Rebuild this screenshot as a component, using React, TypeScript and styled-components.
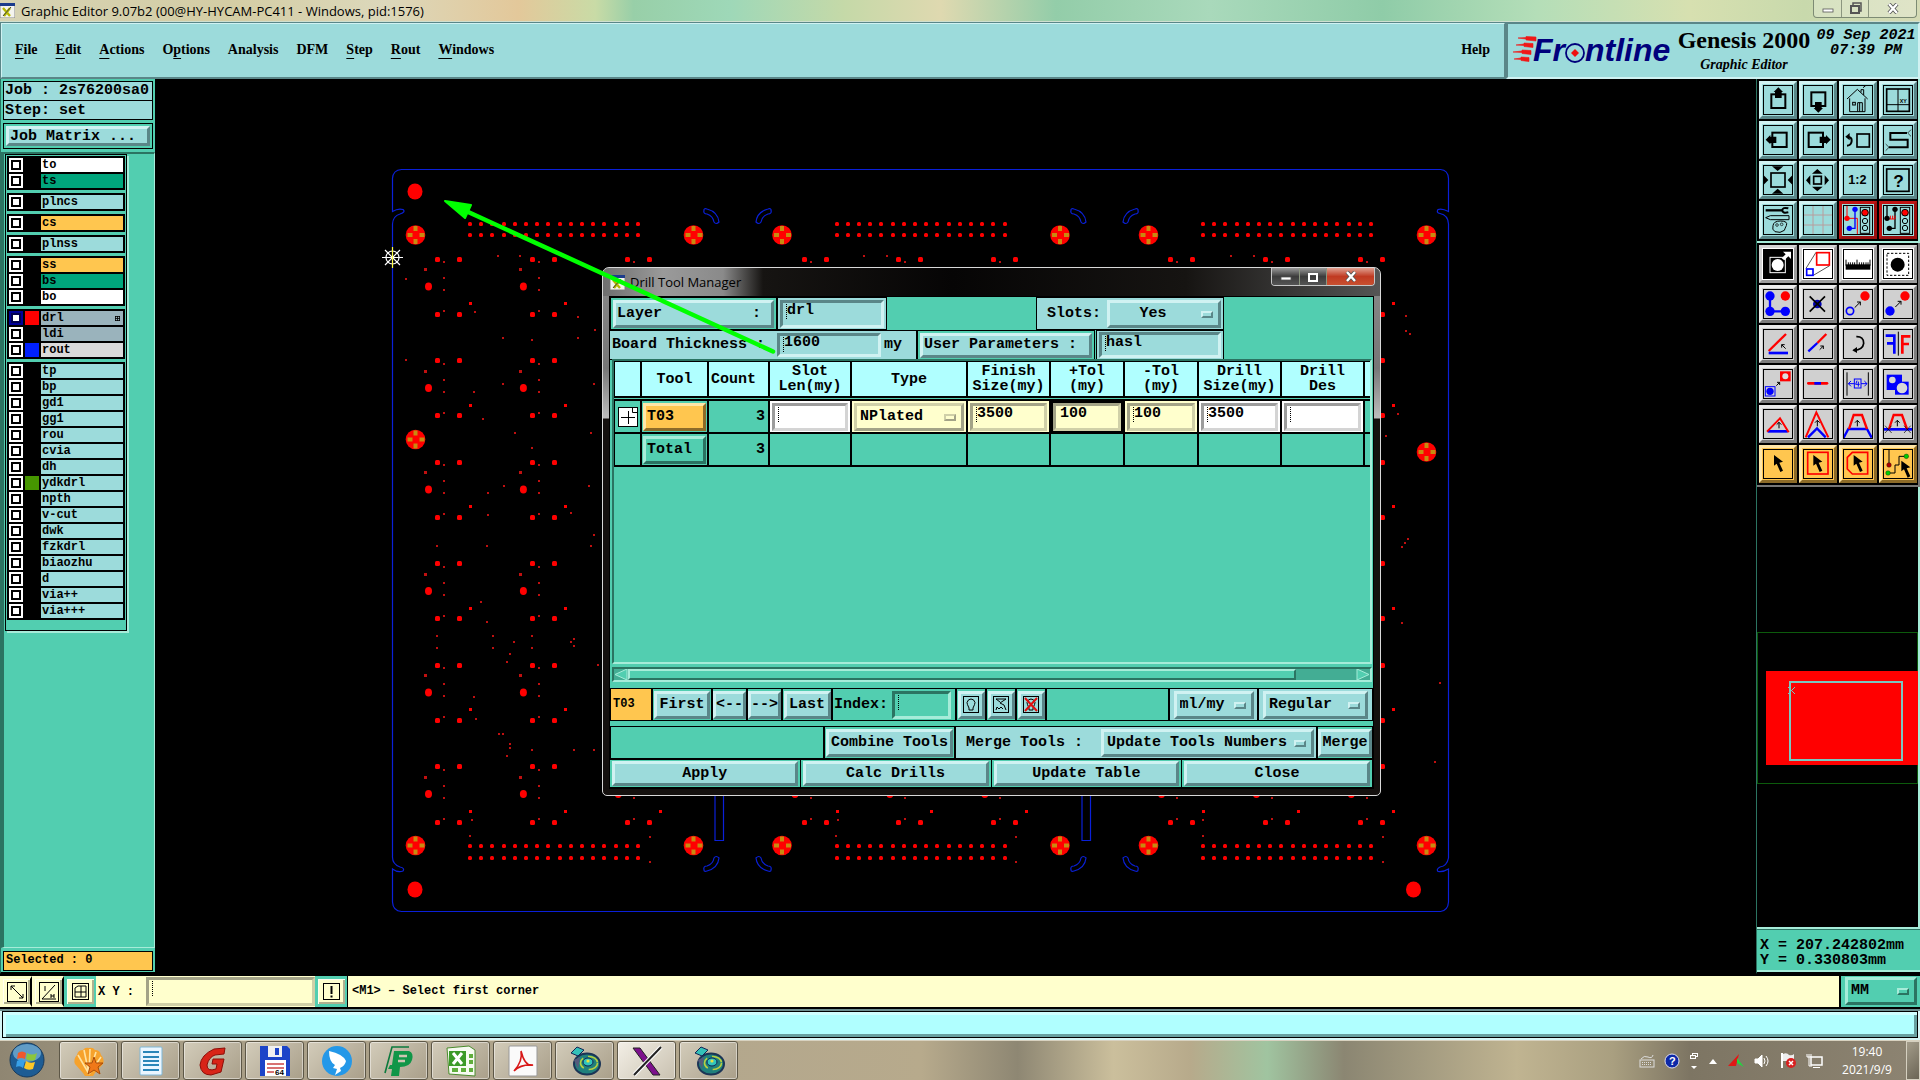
import React from "react";
import styled, { createGlobalStyle, css } from "styled-components";

const c = {
  pale: "#9cdbdb",
  paleLight: "#d0f2f2",
  paleDark: "#5a8688",
  teal: "#52ceb0",
  tealLight: "#a6ecd9",
  tealDark: "#2b7462",
  aqua: "#b0ffff",
  cream: "#ffffcd",
  amber: "#ffc64f",
  blue: "#0a20d8",
};

const mono = '"Liberation Mono", monospace';
const ui = '"Open Sans", "Noto Sans", sans-serif';

const Global = createGlobalStyle`
  *, *::after { box-sizing: border-box; }
  body { margin: 0; background: #000; color: #000; overflow: hidden; }
  button, input, select { font: inherit; color: inherit; margin: 0; border-radius: 0; }
  button { cursor: default; }
`;

type Tone = "pale" | "teal" | "cream" | "white" | "amber" | "grey" | "red";
const tones: Record<Tone, [string, string, string]> = {
  pale: [c.pale, c.paleLight, c.paleDark],
  teal: [c.teal, c.tealLight, c.tealDark],
  cream: [c.cream, "#d0d0a8", "#a3a387"],
  white: ["#ffffff", "#d4d4d4", "#9c9c9c"],
  amber: [c.amber, "#ffe6a8", "#8d6b28"],
  grey: ["#d0d0d0", "#ececec", "#7e7e7e"],
  red: [c.pale, "#c01414", "#9c1010"],
};
const raised = (t: Tone, w = 3) => css`
  background-color: ${tones[t][0]};
  border: ${w}px solid;
  border-color: ${tones[t][1]} ${tones[t][2]} ${tones[t][2]} ${tones[t][1]};
`;
const sunken = (t: Tone, w = 3) => css`
  background-color: ${tones[t][0]};
  border: ${w}px solid;
  border-color: ${tones[t][2]} ${tones[t][1]} ${tones[t][1]} ${tones[t][2]};
`;

const Screen = styled.div`
  min-height: 100vh;
  display: grid;
  grid-template-rows: 22px 57px minmax(0, 1fr) 35px 31px 40px;
  font: bold 15px/16px ${mono};
`;

/* ---------- window title ---------- */
const TitleBar = styled.header`
  display: flex;
  align-items: center;
  gap: 6px;
  font: 13px/20px ${ui};
  border-bottom: 1px solid #cfe0d0;
  background: linear-gradient(90deg, #d6d3b4 0, #d4cda4 12%, #dcd8bb 20%, #e3c89a 27%, #c9dba6 31%, #98cfa8 33%, #9ed8b8 38%, #c5d9a8 44%, #dfd9b0 49%, #93cda9 55%, #a9d9bb 63%, #8fcca8 72%, #b4deb8 80%, #d7e0b0 88%, #c8d9ac 94%, #d5dbb5 100%);
`;
const WinTitle = styled.span`
  flex: 1;
  white-space: nowrap;
`;
const CaptionButtons = styled.div`
  display: flex;
  align-self: flex-start;
  height: 18px;
  margin-right: 3px;
  border: 1px solid #7d8b74;
  border-top: 0;
  border-radius: 0 0 4px 4px;
  overflow: hidden;
`;
const CaptionButton = styled.button<{ $w: number; $fill?: string }>`
  width: ${(p) => p.$w}px;
  display: grid;
  place-items: center;
  padding: 0;
  border: 0;
  border-right: 1px solid #8b967f;
  background: ${(p) => p.$fill ?? "rgba(255,255,255,.25)"};
  &:last-child { border-right: 0; }
`;

/* ---------- menu row ---------- */
const MenuRow = styled.div`
  display: flex;
  background: ${c.pale};
`;
const MenuBar = styled.nav`
  flex: 1;
  display: flex;
  align-items: center;
  gap: 18px;
  padding: 0 14px 1px 13px;
  ${raised("pale", 2)}
  outline: 1px solid ${c.paleDark};
  outline-offset: -1px;
  font: bold 14px/20px "Liberation Serif", serif;
`;
const MenuItem = styled.button`
  padding: 0;
  border: 0;
  background: none;
  u { text-underline-offset: 4px; }
  &:last-child { margin-left: auto; }
`;
const Brand = styled.section`
  width: 414px;
  display: grid;
  grid-template-columns: 162px 140px 1fr;
  ${sunken("pale", 2)}
  padding-left: 4px;
`;
const ProductBox = styled.div`
  padding-top: 2px;
  text-align: center;
  white-space: nowrap;
  font: bold 24px/28px "Liberation Serif", serif;
  small { display: block; font: italic bold 14px/22px "Liberation Serif", serif; }
`;
const DateBox = styled.div`
  text-align: center;
  padding-top: 4px;
  font: italic bold 15px/15px ${mono};
  white-space: nowrap;
`;

/* ---------- main area ---------- */
const Main = styled.main`
  display: grid;
  grid-template-columns: 155px minmax(0, 1fr) 164px;
  min-height: 0;
  background: #000;
`;
const Side = styled.aside`
  display: flex;
  flex-direction: column;
  gap: 3px;
  padding: 2px 2px 1px 2px;
  background: ${c.teal};
  border-left: 1px solid ${c.tealDark};
  border-bottom: 2px solid #000;
`;
const JobInfo = styled.div`
  background: ${c.pale};
  border: 1px solid #000;
  div { padding: 0 1px; height: 18px; line-height: 18px; white-space: nowrap; }
  div + div { height: 19px; line-height: 19px; border-top: 1px solid #000; }
`;
const Framed = styled.div`
  padding: 2px;
  border: 1px solid #000;
`;
const Push = styled.button<{ $tone?: Tone; $align?: string; $w?: number; $h?: number }>`
  ${(p) => raised(p.$tone ?? "pale")}
  ${(p) => (p.$w ? `width: ${p.$w}px;` : "")}
  height: ${(p) => p.$h ?? 28}px;
  padding: ${(p) => (p.$align ? "0 1px" : "0")};
  text-align: ${(p) => p.$align ?? "center"};
  white-space: pre;
  display: ${(p) => (p.$align ? "block" : "grid")};
  place-items: center;
`;
const MatrixButton = styled(Push)`
  width: 100%;
`;
const LayerPane = styled.div`
  flex: 1;
  margin: 0 -2px;
  border: 3px solid;
  border-width: 2px 1px 1px 3px;
  border-color: ${c.tealDark} ${c.tealLight} ${c.tealLight} ${c.tealDark};
`;
const LayerList = styled.div`
  width: 122px;
  display: flex;
  flex-direction: column;
  gap: 3px;
  padding: 1px 1px 10px;
  margin-left: 1px;
  border: 1px solid #000;
  box-shadow: 2px 2px 0 ${c.tealLight};
`;
const LayerGroup = styled.ul`
  margin: 0;
  padding: 2px;
  list-style: none;
  display: grid;
  gap: 2px;
  background: #000;
  font-size: 12px;
  line-height: 14px;
`;
const LayerRow = styled.li`
  height: 14px;
  label { display: grid; grid-template-columns: 14px 14px 1fr; gap: 2px; height: 14px; }
`;
const LayerCheck = styled.input<{ $on?: boolean }>`
  appearance: none;
  width: 14px;
  height: 14px;
  background: #fff;
  border: 2px solid ${(p) => (p.$on ? "#000098" : "#fff")};
  box-shadow: inset 0 0 0 2px ${(p) => (p.$on ? "#000050" : "#000")};
`;
const Swatch = styled.span<{ $fill: string }>`
  background: ${(p) => p.$fill};
`;
const LayerName = styled.span<{ $fill: string }>`
  display: flex;
  justify-content: space-between;
  align-items: center;
  padding: 0 3px 0 1px;
  background: ${(p) => p.$fill};
`;
const Selected = styled.div`
  height: 20px;
  padding: 0 2px;
  background: ${c.amber};
  border: 1px solid #000;
  font-size: 12px;
  line-height: 17px;
`;

const Canvas = styled.div`
  position: relative;
  overflow: hidden;
  background: #000;
`;
const Artwork = styled.svg`
  position: absolute;
  inset: 0;
  width: 100%;
  height: 100%;
  pointer-events: none;
`;

/* ---------- right tools ---------- */
const Tools = styled.aside`
  display: flex;
  flex-direction: column;
  background: ${c.teal};
  border-left: 1px solid ${c.tealDark};
  border-bottom: 2px solid #000;
`;
const ToolGrid = styled.div<{ $grey?: boolean }>`
  display: grid;
  grid-template-columns: repeat(4, 38px);
  gap: 2px;
  padding: 2px 1px 2px 2px;
  background: #000;
  border-right: 2px solid ${(p) => (p.$grey ? "#777" : c.tealLight)};
  border-bottom: 2px solid ${(p) => (p.$grey ? "#777" : c.tealLight)};
`;
const ToolButton = styled.button<{ $tone: Tone }>`
  ${(p) => raised(p.$tone)}
  width: 38px;
  height: 38px;
  padding: 1px;
  svg { display: block; width: 30px; height: 30px; }
`;
const Overview = styled.div`
  flex: 1;
  display: flex;
  flex-direction: column;
  justify-content: center;
  padding-top: 2px;
  background: #000;
  border-right: 2px solid ${c.tealLight};
  border-bottom: 2px solid ${c.tealLight};
`;
const OverviewFrame = styled.div`
  height: 152px;
  padding: 38px 0 18px 8px;
  border: 1px solid #0c5a0c;
`;
const Coordinates = styled.div`
  height: 43px;
  padding: 8px 3px 0;
  border-top: 1px solid ${c.tealDark};
  border-bottom: 2px solid ${c.tealLight};
  line-height: 15px;
  white-space: pre;
`;

/* ---------- prompt / status ---------- */
const Prompt = styled.div`
  display: flex;
  align-items: stretch;
  background: ${c.cream};
  border: 2px solid #000;
  border-width: 2px 0 2px 0;
  font-size: 12px;
`;
const SmallTool = styled.button<{ $teal?: boolean }>`
  width: 32px;
  padding: 0;
  background: ${c.cream};
  border: 3px solid ${(p) => (p.$teal ? c.teal : c.cream)};
  border-right: 2px solid ${(p) => (p.$teal ? c.teal : "#000")};
  display: grid;
  place-items: center;
  box-shadow: inset 1px 1px 0 #fffff0, inset -2px -2px 0 #b0b08f;
`;
const PromptLabel = styled.label`
  display: flex;
  align-items: center;
  padding-left: 2px;
  gap: 12px;
  white-space: pre;
`;
const Field = styled.input<{ $tone?: Tone; $w?: number; $h?: number; $caret?: boolean }>`
  ${(p) => sunken(p.$tone ?? "pale")}
  width: ${(p) => (p.$w ? `${p.$w}px` : "100%")};
  height: ${(p) => p.$h ?? 28}px;
  min-width: 0;
  display: block;
  padding: 0 2px 6px 4px;
  outline: 0;
  background-image: ${(p) => (p.$caret === false ? "none" : "repeating-linear-gradient(#000 0 1px, transparent 1px 2px)")};
  background-size: 1px 15px;
  background-position: 3px 1px;
  background-repeat: no-repeat;
`;
const Message = styled.div`
  flex: 1;
  padding-left: 4px;
  line-height: 30px;
  border-left: 1px solid #000;
  border-right: 2px solid #000;
`;
const UnitBox = styled.div`
  padding: 1px 3px 0 4px;
  background: ${c.teal};
  font-size: 15px;
`;
const StatusBar = styled.div`
  padding: 2px 2px 1px;
  background: linear-gradient(#6f8f90 0 2px, #d6f6f6 2px);
  div { height: 27px; border: 1px solid #000; box-shadow: inset 3px 3px 0 #d0ffff, inset -3px -3px 0 #68a0a0; background: ${c.aqua}; }
`;

const PickBox = styled.span<{ $w: number; $h: number; $tone: Tone }>`
  position: relative;
  display: block;
  width: ${(p) => p.$w}px;
  height: ${(p) => p.$h}px;
  &::after {
    content: "";
    position: absolute;
    right: 8px;
    top: calc(50% - 3px);
    width: 12px;
    height: 7px;
    ${(p) => raised(p.$tone, 2)}
    pointer-events: none;
  }
`;
const PickSelect = styled.select<{ $tone: Tone; $align: string }>`
  ${(p) => raised(p.$tone)}
  appearance: none;
  width: 100%;
  height: 100%;
  padding: ${(p) => (p.$align === "center" ? "0 22px 0 0" : "0 0 0 3px")};
  text-align: ${(p) => p.$align};
  text-align-last: ${(p) => p.$align};
  outline: 0;
`;
function Pick(p: { value: string; label: string; w: number; h?: number; tone?: Tone; align?: string }) {
  const tone = p.tone ?? "pale";
  return (
    <PickBox $w={p.w} $h={p.h ?? 28} $tone={tone}>
      <PickSelect aria-label={p.label} $tone={tone} $align={p.align ?? "left"} defaultValue={p.value}>
        <option>{p.value}</option>
      </PickSelect>
    </PickBox>
  );
}

/* ---------- dialog ---------- */
const Dialog = styled.section`
  position: absolute;
  left: 447px;
  top: 188px;
  width: 779px;
  padding: 0 6px 6px;
  display: flex;
  flex-direction: column;
  border: 1px solid #d8d8d8;
  border-radius: 7px 7px 5px 5px;
  background: linear-gradient(#8a8a8a 0, #777 100px, #bdbdbd 150px, #14100e 151px);
`;
const DialogTitle = styled.div`
  height: 28px;
  margin: 0 -6px;
  padding-left: 7px;
  display: flex;
  align-items: center;
  gap: 5px;
  border-radius: 6px 6px 0 0;
  background: linear-gradient(90deg, #6f6f6f 0, #9a9a9a 60px, #8a8a8a 120px, #161412 160px, #060505 45%, #161412 75%, #555 100%);
  font: 13px/20px ${ui};
  span { flex: 1; }
`;
const DialogButtons = styled(CaptionButtons)`
  margin-right: 5px;
  border-color: #c6c6c6;
`;
const DialogBody = styled.div`
  border: 1px solid #000;
  border-bottom-width: 2px;
  background: ${c.teal};
  display: flex;
  flex-direction: column;
`;
const Line = styled.div`
  display: flex;
  height: 33px;
  align-items: stretch;
`;
const Cell = styled.div<{ $w?: number; $tone?: Tone; $gap?: number; $pad?: number }>`
  ${(p) => (p.$w ? `width: ${p.$w}px;` : "flex: 1;")}
  display: flex;
  align-items: center;
  gap: ${(p) => p.$gap ?? 0}px;
  padding: 0 ${(p) => p.$pad ?? 2}px;
  background: ${(p) => tones[p.$tone ?? "teal"][0]};
  border: 1px solid #000;
  white-space: pre;
`;
const Spacer = styled.div<{ $w?: number }>`
  ${(p) => (p.$w ? `width: ${p.$w}px;` : "flex: 1;")}
`;
const RowGap = styled.div`
  height: 5px;
`;
const FieldLabel = styled.label`
  white-space: pre;
`;
const WideLine = styled(Line)`
  height: 30px;
`;
const ThicknessCell = styled(Cell)`
  justify-content: space-between;
  padding: 0 4px 0 2px;
  border-left-width: 0;
`;
const TableView = styled.div`
  height: 305px;
  margin: -1px 1px 0 2px;
  overflow: hidden;
  ${sunken("teal", 2)}
`;
const ToolTable = styled.table`
  width: 780px;
  table-layout: fixed;
  border-collapse: collapse;
  margin: -1px 0 0 -1px;
  th, td { border: 2px solid #000; padding: 0; font-weight: bold; }
  th { height: 36px; background: ${c.aqua}; line-height: 15px; }
  th:nth-child(3) { text-align: left; padding-left: 2px; }
  td { height: 33px; text-align: right; }
`;
const GapRow = styled.tr`
  && td { height: 3px; border-left: 0; border-right: 0; }
`;
const CountCell = styled.td`
  && { padding-right: 3px; }
`;
const InputCell = styled.td<{ $tone: Tone; $focus?: boolean }>`
  background: ${(p) => tones[p.$tone][0]};
  ${(p) => (p.$focus ? "box-shadow: inset 0 0 0 2px #000;" : "")}
  && { padding: 1px 2px; }
`;
const Expand = styled.button`
  display: block;
  width: 20px;
  height: 20px;
  margin: 0 auto;
  padding: 0;
  border: 1px solid #000;
  background: #fff;
  svg { display: block; }
`;
const RowButton = styled(Push)`
  width: 63px;
  margin: 0 auto;
`;
const Scroll = styled.div`
  display: flex;
  height: 15px;
  margin: 3px 1px 6px 2px;
  ${sunken("teal", 2)}
  background: #43ad94;
  svg { display: block; }
`;
const Thumb = styled.div`
  width: 668px;
  margin-right: auto;
  ${raised("teal", 2)}
`;
const ToolTag = styled.div`
  width: 42px;
  padding-left: 2px;
  background: ${c.amber};
  border: 1px solid #000;
  font-size: 12px;
  line-height: 31px;
`;
const NavCell = styled(Cell)`
  justify-content: center;
  padding: 0;
`;
const Footer = styled.div`
  display: grid;
  grid-template-columns: repeat(4, 1fr);
  border-top: 1px solid #000;
  > div { padding: 1px 2px; border-right: 1px solid #000; }
  button { width: 100%; }
`;

/* ---------- taskbar ---------- */
const Taskbar = styled.footer`
  display: flex;
  padding-left: 5px;
  background: linear-gradient(90deg, #8f8672 0, #a79d86 10%, #b3a78d 36%, #b7aa8c 48%, #8e8773 53%, #cbbf9c 58%, #b7aa8b 62%, #a0c4a0 66%, #8b8672 70%, #c0b491 79%, #a99f80 84%, #7d7563 88%, #8d8472 100%);
  border-top: 1px solid #d8d2c0;
`;
const Start = styled.button`
  width: 44px;
  margin-right: 10px;
  padding: 0;
  border: 0;
  background: none;
`;
const TaskButton = styled.button<{ $active?: boolean }>`
  width: 59px;
  margin-right: 3px;
  padding: 0;
  display: grid;
  place-items: center;
  border: 1px solid #5d5747;
  border-radius: 3px;
  box-shadow: inset 0 0 0 1px rgba(255, 255, 255, 0.45);
  background: ${(p) => (p.$active ? "linear-gradient(135deg,#f3efe6,#c9c1b0)" : "linear-gradient(135deg,#d3ccba,#a99f8a)")};
`;
const Tray = styled.div`
  margin-left: auto;
  display: flex;
  align-items: center;
  gap: 9px;
  color: #fff;
  svg { display: block; }
`;
const Clock = styled.div`
  width: 70px;
  text-align: center;
  font: 12px/18px ${ui};
`;
const ShowDesktop = styled.button`
  width: 14px;
  height: 39px;
  margin-left: -5px;
  padding: 0;
  border: 1px solid #d5d0c0;
  background: linear-gradient(135deg, #a39c8a, #6b6555);
`;

/* ---------- drawings ---------- */
const k = { fill: "none", stroke: "#000" };
const cursor = "M33 18V50L41 44L52 69L60 65L49 41L60 38Z";
const R = "#f00";
const B = "#0000ff";
const tip = (x: number, y: number) => <path {...k} strokeWidth="3" d={`M${x} ${y}l17 -17m-10 0h10v10`} />;
const light = (
  <g stroke="#000" strokeWidth="3" fill="none">
    <rect x="52" y="7" width="28" height="78" />
    <circle cx="66" cy="23" r="10" fill={R} />
    <circle cx="66" cy="48" r="8" />
    <circle cx="66" cy="69" r="8" />
  </g>
);
const trap = <path {...k} stroke={R} strokeWidth="7" d="M18 60L32 18H57L72 60" />;
const up = (x: number, y: number) => <path {...k} strokeWidth="3" d={`M${x} ${y}v-18m-7 7l7 -7l7 7`} />;

const viewTools: [string, Tone, React.ReactNode][] = [
  ["Pan up", "pale", <><rect {...k} strokeWidth="6" x="25" y="28" width="42" height="41" /><path d="M46 7L60 21H56V39H36V21H32Z" /></>],
  ["Pan down", "pale", <><rect {...k} strokeWidth="6" x="25" y="22" width="42" height="41" /><path d="M46 83L60 69H56V51H36V69H32Z" /></>],
  ["Home", "pale", <g {...k} strokeWidth="3"><path d="M12 42L43 13L74 42M20 40V80H66V40M54 22V14H62V30M60 8l8 -6" /><rect x="29" y="52" width="8" height="8" /><path d="M44 80V53H58V80M50 53V80" /></g>],
  ["Zoom XY", "pale", <><rect {...k} strokeWidth="5" x="11" y="12" width="68" height="67" /><path {...k} strokeWidth="3" d="M45 12V79M11 59H79" /><text x="50" y="53" fontSize="16" fontFamily="Liberation Sans">XY</text></>],
  ["Pan left", "pale", <><rect {...k} strokeWidth="6" x="28" y="23" width="43" height="43" /><path d="M8 44L22 30V35H40V54H22V58Z" /></>],
  ["Pan right", "pale", <><rect {...k} strokeWidth="6" x="17" y="23" width="43" height="43" /><path d="M83 44L69 30V35H50V54H69V58Z" /></>],
  ["Previous view", "pale", <><rect {...k} strokeWidth="5" x="42" y="27" width="37" height="39" /><path {...k} strokeWidth="6" d="M14 36Q27 36 26 48Q25 61 12 62" /><path d="M7 35L20 24V46Z" /></>],
  ["Serpentine", "pale", <><path {...k} strokeWidth="6" d="M72 24H22V44H74V67H18" /><path {...k} strokeWidth="2" d="M74 24L84 14M74 24L84 34M18 67L8 57M18 67L8 77" /></>],
  ["Zoom out", "pale", <><rect {...k} strokeWidth="5" x="24" y="24" width="42" height="42" /><path d="M27 4H61L44 18ZM27 86H61L44 71ZM2 31L16 45L2 59ZM88 31L74 45L88 59Z" /></>],
  ["Zoom in", "pale", <><rect {...k} strokeWidth="5" x="32" y="34" width="23" height="23" /><path d="M43 12L59 26H27ZM43 79L59 65H27ZM9 46L22 31V61ZM78 46L65 31V61Z" /></>],
  ["Scale", "pale", <text x="16" y="58" fontSize="38" fontWeight="bold" fontFamily="Liberation Sans">1:2</text>],
  ["Query", "pale", <><rect {...k} strokeWidth="5" x="11" y="12" width="67" height="67" /><text x="31" y="65" fontSize="52" fontWeight="bold" fontFamily="Liberation Sans">?</text></>],
  ["Options", "pale", <><path strokeWidth="7" {...k} d="M8 16H58" /><path {...k} strokeWidth="6" d="M76 10Q58 6 58 16T76 22" /><path {...k} strokeWidth="3" d="M8 38L22 32H78V44H22Z" /><path {...k} strokeWidth="3" d="M30 62Q32 48 52 48Q76 48 70 62Q66 70 64 76Q52 86 36 80Q26 74 30 62Z" /><circle {...k} strokeWidth="2" cx="42" cy="60" r="4" /><circle {...k} strokeWidth="2" cx="56" cy="58" r="4" /></>],
  ["Grid", "pale", <path {...k} stroke="#b89c9c" strokeWidth="3" d="M30 2V88M60 2V88M2 30H88M2 60H88" />],
  ["Signal stop", "red", <><path {...k} stroke={R} strokeWidth="3" d="M12 2V40H43V88" /><circle cx="12" cy="40" r="8" fill={R} /><path {...k} stroke={B} strokeWidth="4" d="M36 13V70H19" /><circle cx="36" cy="13" r="8" fill={B} /><circle cx="19" cy="70" r="8" fill={B} />{light}</>],
  ["Spacing stop", "red", <><path {...k} strokeWidth="4" d="M12 2V40M36 13V70H19" /><path {...k} stroke={R} strokeWidth="3" d="M16 42H36M22 42V32M29 42V32M36 42V32" /><circle cx="12" cy="40" r="8" /><circle cx="36" cy="13" r="8" /><circle cx="19" cy="70" r="8" />{light}</>],
];

const editTools: [string, Tone, React.ReactNode][] = [
  ["Resize out", "white", <><rect width="90" height="90" /><rect x="21" y="25" width="46" height="46" fill="none" stroke="#fff" strokeWidth="3" /><circle cx="44" cy="48" r="18" fill="#fff" /><path d="M56 28L68 16L60 8H84V30L76 22L64 34Z" fill="#fff" /></>],
  ["Zoom area", "white", <><path {...k} strokeWidth="2" d="M9 58L39 10M31 79L80 50" /><rect x="41" y="11" width="38" height="37" fill="none" stroke={R} strokeWidth="5" /><rect x="11" y="60" width="19" height="19" fill="none" stroke={B} strokeWidth="5" /></>],
  ["Measure", "white", <><rect x="8" y="46" width="74" height="16" /><path {...k} strokeWidth="3" d="M9 32V50M16 40V50M22 40V50M29 40V50M35 40V50M42 32V50M49 40V50M56 40V50M62 40V50M69 40V50M75 40V50M81 32V50" /></>],
  ["Select", "white", <><rect {...k} strokeWidth="3" strokeDasharray="7 5" x="12" y="13" width="65" height="66" /><circle cx="44" cy="47" r="21" /></>],
  ["Chain", "grey", <><path {...k} stroke={B} strokeWidth="7" d="M21 21V67H67" /><circle cx="21" cy="21" r="14" fill={B} /><circle cx="21" cy="67" r="14" fill={B} /><circle cx="67" cy="67" r="14" fill={B} /><circle cx="67" cy="21" r="14" fill={R} /></>],
  ["Delete", "grey", <><circle cx="43" cy="45" r="13" fill="#0000b0" /><path {...k} strokeWidth="5" d="M20 22L66 68M66 22L20 68" /></>],
  ["Copy", "grey", <><circle cx="21" cy="66" r="11" fill="none" stroke={B} strokeWidth="5" /><circle cx="66" cy="21" r="14" fill={R} />{tip(35, 56)}</>],
  ["Move", "grey", <><circle cx="21" cy="66" r="14" fill={B} /><circle cx="66" cy="21" r="14" fill={R} />{tip(37, 54)}</>],
  ["Angle", "grey", <><path {...k} stroke={R} strokeWidth="7" d="M69 15L17 66" /><path {...k} stroke={B} strokeWidth="8" d="M17 72H75" /><path {...k} strokeWidth="3" d="M68 59L56 47M56 56V47H65" /></>],
  ["Extend", "grey", <><path {...k} stroke={R} strokeWidth="7" d="M70 15L43 42" /><path {...k} stroke={B} strokeWidth="7" d="M43 42L16 67" /><path {...k} strokeWidth="3" d="M50 62L61 51M52 51H61V60" /></>],
  ["Rotate", "grey", <><path {...k} strokeWidth="5" d="M40 23Q62 22 62 43Q60 62 32 64" /><path d="M28 64L42 54V72Z" /></>],
  ["Mirror", "grey", <><path {...k} stroke={B} strokeWidth="8" d="M8 20H34V74M12 43H34" /><path {...k} stroke={R} strokeWidth="8" d="M82 22H58V74M58 45H78" /><path {...k} strokeWidth="3" d="M46 8V80" /></>],
  ["Transform", "grey", <><rect x="51" y="7" width="32" height="30" fill={R} /><circle cx="67" cy="22" r="9" fill="#ddd" /><rect x="7" y="53" width="29" height="28" fill="none" stroke={B} strokeWidth="3" /><circle cx="21" cy="67" r="11" fill={B} /><path {...k} strokeWidth="3" d="M40 50L50 40M42 40H50V48" /></>],
  ["Break", "grey", <><path {...k} stroke={R} strokeWidth="8" strokeLinecap="round" d="M16 43H72" /><path {...k} stroke={B} strokeWidth="8" d="M34 43H54" /></>],
  ["Distance", "grey", <><path {...k} strokeWidth="3" d="M12 10V80M76 10V80" /><path {...k} stroke={B} strokeWidth="3" d="M34 44H16M24 36L16 44L24 52M54 44H72M64 36L72 44L64 52" /><rect x="34" y="30" width="20" height="27" fill="none" stroke={B} strokeWidth="3" /><path {...k} stroke={B} strokeWidth="3" d="M42 35L38 46H50M46 38V53" /></>],
  ["Union", "grey", <><rect x="11" y="17" width="46" height="46" fill={B} /><rect x="36" y="38" width="41" height="39" fill={B} /><circle cx="28" cy="33" r="10" fill="#d8d8d8" /><circle cx="57" cy="57" r="16" fill="#d8d8d8" /></>],
  ["Triangle", "grey", <><path {...k} stroke={B} strokeWidth="8" d="M14 67H74" /><path {...k} stroke={R} strokeWidth="6" d="M12 68L51 28L77 70" />{up(48, 58)}</>],
  ["Peak", "grey", <><path {...k} stroke={R} strokeWidth="6" d="M8 85L40 10L76 85" /><path {...k} stroke={B} strokeWidth="7" d="M15 85L42 58L68 85" />{up(43, 52)}</>],
  ["Trapeze", "grey", <><path {...k} stroke={B} strokeWidth="7" d="M2 86L16 60H72L86 86" />{trap}{up(43, 52)}</>],
  ["Trapeze cut", "grey", <><path {...k} stroke={B} strokeWidth="8" d="M2 61H88" />{trap}{up(43, 52)}<path {...k} strokeWidth="2" d="M6 50L26 72M26 50L6 72M63 50L83 72M83 50L63 72" /></>],
  ["Pointer", "amber", <path d={cursor} />],
  ["Rectangle select", "amber", <><rect x="14" y="10" width="61" height="65" fill="none" stroke={R} strokeWidth="5" /><path d={cursor} transform="translate(-2 0)" /></>],
  ["Polygon select", "amber", <><path {...k} stroke={R} strokeWidth="5" d="M28 10H74V75H28L13 60V25Z" /><path d={cursor} transform="translate(-1 0)" /></>],
  ["Net select", "amber", <><path {...k} strokeWidth="3" d="M18 2V48M15 72H36V48H48V22H70" /><circle cx="18" cy="48" r="7" fill="#a00" stroke="#000" /><circle cx="70" cy="22" r="7" fill="#0c0" stroke="#000" /><circle cx="15" cy="72" r="7" fill="#0c0" stroke="#000" /><path d={cursor} transform="translate(22 17)" /></>],
];

function ToolSet({ items, grey }: { items: typeof viewTools; grey?: boolean }) {
  return (
    <ToolGrid $grey={grey}>
      {items.map(([name, tone, art]) => (
        <ToolButton key={name} $tone={tone} aria-label={name}>
          <svg viewBox="0 0 90 90">
            {art}
            <rect x="1.5" y="1.5" width="87" height="87" fill="none" stroke="#000" strokeWidth="3" />
          </svg>
        </ToolButton>
      ))}
    </ToolGrid>
  );
}

const XIcon = () => (
  <svg width="15" height="15" viewBox="0 0 15 15" aria-hidden="true">
    <rect width="15" height="15" fill="#f4f4ee" stroke="#888" />
    <rect width="15" height="3" fill="#1c3c8c" />
    <path d="M3 5L10 13M10 5L4 13" stroke="#b5b800" strokeWidth="2.4" />
    <path d="M11 4L3 13" stroke="#444" strokeWidth="1" />
  </svg>
);

const Caption = ({ dark }: { dark?: boolean }) => {
  const Box = dark ? DialogButtons : CaptionButtons;
  const g = dark ? "linear-gradient(#999,#3c3c3c 50%,#555)" : undefined;
  return (
    <Box>
      <CaptionButton $w={28} $fill={g} aria-label="Minimize">
        <svg width="12" height="12"><rect x="1" y="6" width="10" height="3" fill="#fff" stroke="#555" strokeWidth=".8" /></svg>
      </CaptionButton>
      <CaptionButton $w={27} $fill={g} aria-label="Restore">
        <svg width="13" height="13" fill="none">
          {!dark && <path d="M4 3V1H12V9H10" stroke="#555" strokeWidth="1.5" />}
          <rect x="2" y="4" width="8" height="7" stroke={dark ? "#fff" : "#555"} strokeWidth="2" />
        </svg>
      </CaptionButton>
      <CaptionButton $w={47} $fill={dark ? "linear-gradient(#e0a090,#c03a22 50%,#c85030)" : undefined} aria-label="Close window">
        <svg width="12" height="11" fill="none"><path d="M2 1L10 10M10 1L2 10" stroke="#555" strokeWidth="4" /><path d="M2 1L10 10M10 1L2 10" stroke="#fff" strokeWidth="2.4" /></svg>
      </CaptionButton>
    </Box>
  );
};

/* ---------- board artwork ---------- */
const panelStep = 366.5;
const colStep = 94.9;
const rowStep = 101.5;
const ghosts: [number, number][] = [
  [66, 245], [298, 198], [354, 198], [500, 324], [543, 351], [311, 367], [385, 372], [500, 367], [66, 413], [311, 462], [238, 479], [542, 462],
  [260, 534], [341, 563], [533, 563], [384, 594], [313, 673], [273, 687], [528, 673], [273, 732], [483, 728], [542, 773], [145, 796], [270, 796],
  [533, 796], [255, 912], [270, 953], [144, 982], [384, 982], [285, 982], [144, 1007], [384, 1007], [285, 1007], [338, 994], [328, 1019], [321, 1036],
  [490, 989], [484, 995], [490, 1003], [551, 1041], [237, 1108], [242, 1153], [301, 1184], [311, 1184], [328, 1205], [328, 1213], [321, 1230],
  [384, 1217], [490, 1217], [542, 1217], [232, 1361], [228, 1395], [682, 1397], [682, 1448], [240, 314],
  [1158, 1361], [1154, 1395], [1224, 198], [1283, 198],
];
const strays: [number, number][] = [
  [1406, 316], [1406, 331], [1410, 334], [1398, 414], [1386, 436], [1402, 547], [1405, 543], [1408, 539], [1402, 623], [1440, 683], [1435, 762],
  [1203, 820], [1203, 836], [1383, 837], [1383, 862], [1016, 837], [1016, 862], [1231, 256], [1254, 256],
];
const dot = (x: number, y: number, s: number, key: string, tone = R) => (
  <rect key={key} x={Math.round(x - s / 2)} y={Math.round(y - s / 2)} width={s} height={s} rx={s > 3 ? 1.5 : 0} fill={tone} />
);
const dim = "#c01010";

function Board() {
  const marks: React.ReactNode[] = [];
  for (let p = 0; p < 3; p++) {
    const px = p * panelStep;
    for (let i = 0; i < 16; i++)
      [224, 235, 846, 858].forEach((y) => marks.push(dot(470 + px + i * 11.2, y, 4, `r${p}-${i}-${y}`)));
    for (let q = 0; q < 3; q++)
      for (let r = 0; r < 6; r++) {
        const x = 437.5 + px + q * colStep;
        const y = 259 + r * rowStep;
        const id = `${p}-${q}-${r}-`;
        marks.push(dot(x, y, 5, id + "a"), dot(x + 22, y, 5, id + "b"), dot(x + 6.5, y + 3, 2, id + "c", dim));
        if (r < 5) {
          marks.push(dot(x, y + 55, 5, id + "d"), dot(x + 22, y + 55, 5, id + "e"), dot(x + 6.5, y + 52, 2, id + "f", dim));
          marks.push(dot(x + 33, y + 44.5, 3, id + "g"));
          marks.push(dot(x - 12, y + 10.5, 3, id + "h", dim));
          marks.push(<ellipse key={id + "i"} cx={x - 9} cy={y + 27.5} rx="3.5" ry="4" fill={R} />);
          marks.push(dot(x + 6.5, y + 19, 2, id + "j", dim), dot(x + 6.5, y + 31, 2, id + "k", dim));
        }
      }
  }
  return marks;
}

function BoardArt() {
  const marks = Board();
  /* lowest row of each panel: component pairs below the last full cell */
  for (let p = 0; p < 3; p++)
    for (let q = 0; q < 3; q++) {
      const x = 437.5 + p * panelStep + q * colStep;
      const id = `low${p}-${q}`;
      marks.push(dot(x - 12, 777, 3, id + "a", dim));
      marks.push(<ellipse key={id + "b"} cx={x - 9} cy="794" rx="3.5" ry="4" fill={R} />);
      marks.push(dot(x + 33, 811.5, 3, id + "c"), dot(x, 822, 5, id + "d"), dot(x + 22, 822, 5, id + "e"), dot(x + 6.5, 819, 2, id + "f", dim));
      marks.push(dot(x + 6.5, 785.5, 2, id + "g", dim), dot(x + 6.5, 797.5, 2, id + "h", dim));
    }
  ghosts.forEach(([x, y], i) => marks.push(dot(380 + x / 2.529, 160 + y / 2.063, 2, `t${i}`, dim)));
  strays.forEach(([x, y], i) => marks.push(dot(x, y, 2, `s${i}`, dim)));
  const pads: [number, number][] = [];
  [415.5, 693.5, 782, 1060, 1148.5, 1426.5].forEach((x) => pads.push([x, 235], [x, 845.5]));
  pads.push([415.5, 439.5], [1426.5, 452]);
  const arc = "M0 0Q-1 4 3 4Q9 6 10 12Q12 15 15 12Q14 2 3 -1Q0 -2 0 0Z";
  return (
    <Artwork viewBox="155 79 1601 895" aria-hidden="true">
      {marks}
      {pads.map(([x, y]) => (
        <g key={`${x}-${y}`}>
          <circle cx={x} cy={y} r="9.8" fill={R} />
          <path d={`M${x - 2} ${y - 9}h4v5h-4zM${x - 2} ${y + 4}h4v5h-4zM${x - 8} ${y - 2}h5v4h-5zM${x + 4} ${y - 2}h5v4h-5z`} fill="#c88a10" />
        </g>
      ))}
      {[[415, 191.5], [415, 889.5], [1413.5, 889.5]].map(([x, y]) => (
        <ellipse key={`${x}-${y}`} cx={x} cy={y} rx="7.5" ry="8" fill={R} />
      ))}
      <g fill="none" stroke={c.blue} strokeWidth="1.2">
        <path d="M392.5 211.5V178.5Q393 170 401.5 169.5H1440.5Q1448 170 1448.5 178.5V211.5Q1442 208 1438 209.5Q1436 213 1440 213.5Q1448 215 1448.5 224V858Q1447 866 1440 867Q1436 869 1438 871.5Q1444 872 1448.5 869V902Q1448 910.5 1440.5 911.5H401.5Q393 911 392.5 902V869Q398 873 403 871Q405 868 400 867Q392 864 392.5 856V224Q393 216 400 214Q406 212 403 209.5Q398 208 392.5 211.5Z" />
        {[704, 1071].map((x) => (
          <g key={x}>
            <path d={arc} transform={`translate(${x} 210)`} />
            <path d={arc} transform={`translate(${x + 67} 210) scale(-1 1)`} />
            <path d={arc} transform={`translate(${x} 870) scale(1 -1)`} />
            <path d={arc} transform={`translate(${x + 67} 870) scale(-1 -1)`} />
            <path d={`M${x + 11} 780V840.5H${x + 19.5}V780`} />
          </g>
        ))}
      </g>
      <g stroke="#fff" fill="none" strokeWidth="1.2">
        <circle cx="392.5" cy="257.5" r="6.5" />
        <path d="M382 257.5H403M385 250L400 265M400 250L385 265" />
        <path d="M392.5 247V268" stroke="#ff4" />
      </g>
    </Artwork>
  );
}

/* ---------- data ---------- */
type Layer = [string, string?, string?];
const dusk = "#9ab3bc";
const layers: Layer[][] = [
  [["to", "#fff"], ["ts", "#00a57c"]],
  [["plncs"]],
  [["cs", c.amber]],
  [["plnss"]],
  [["ss", c.amber], ["bs", "#00a57c"], ["bo", "#fff"]],
  [["drl", dusk, "#f00"], ["ldi", dusk], ["rout", "#dadada", "#0020ff"]],
  [["tp"], ["bp"], ["gd1"], ["gg1"], ["rou"], ["cvia"], ["dh"], ["ydkdrl", c.pale, "#469600"], ["npth"], ["v-cut"], ["dwk"], ["fzkdrl"], ["biaozhu"], ["d"], ["via++"], ["via+++"]],
];
const menus: [string, string, string][] = [
  ["", "F", "ile"], ["", "E", "dit"], ["", "A", "ctions"], ["O", "p", "tions"], ["Analysis", "", ""], ["DFM", "", ""], ["", "S", "tep"], ["", "R", "out"], ["", "W", "indows"], ["Help", "", ""],
];
const columns = ["", "Tool", "Count", "Slot\nLen(my)", "Type", "Finish\nSize(my)", "+Tol\n(my)", "-Tol\n(my)", "Drill\nSize(my)", "Drill\nDes", ""];
const widths = [27, 67, 61, 82, 116, 83, 74, 74, 83, 83, 30];

const taskIcons: [string, React.ReactNode][] = [
  ["Shell", <><path d="M16 3Q20 2 22 5Q27 5 28 10Q32 14 30 19L22 28L20 31H12L10 28L2 19Q0 14 4 10Q5 5 10 5Q12 2 16 3Z" fill="#f6a22c" /><path d="M16 29L5 10M16 29L11 5M16 29L17 4M16 29L23 7M16 29L28 12" stroke="#ffe2a0" strokeWidth="1.6" /><path d="M21 12L23 18L30 18L25 22L27 29L21 25L15 29L17 22L12 18L19 18Z" fill="#f07818" stroke="#a84c08" /></>],
  ["Notes", <><rect x="5" y="2" width="22" height="28" rx="1" fill="#eaf6ff" stroke="#7fb8d8" /><path d="M8 7H24M8 12H24M8 16H24M8 20H24M8 25H24" stroke="#2a86b8" strokeWidth="2.2" /></>],
  ["G", <path d="M28 3L17 4Q4 10 3 20Q4 30 14 30L24 27L27 14H16L15 19H20L19 24Q10 27 10 20Q12 12 18 10L27 9Z" fill="#d82418" stroke="#8c0e08" />],
  ["Floppy", <><path d="M1 1H28L31 4V31H1Z" fill="#1c44c8" /><rect x="9" y="1" width="14" height="11" fill="#f0f0f0" /><rect x="16" y="3" width="4" height="7" fill="#1c44c8" /><rect x="6" y="15" width="21" height="16" fill="#fff" /><path d="M8 19H25M8 23H25M8 27H15" stroke="#c44" strokeWidth="1.4" /><text x="16" y="30" fontSize="8" fontFamily="Liberation Sans" fill="#000">64</text></>],
  ["Bird", <><circle cx="16" cy="16" r="15" fill="#2498e8" /><path d="M8 6Q22 9 25 16Q24 21 19 23L20 26L14 30L16 24L12 23L14 20Q8 17 8 6Z" fill="#fff" /></>],
  ["P", <><path d="M2 28L9 2H26" stroke="#0b7a3c" strokeWidth="1.6" fill="none" /><path d="M11 6H26Q31 8 29 15Q27 22 17 22L16 31H8L9 24H5L7 20H9Z" fill="#109648" /><path d="M16 11H24M15 16H22" stroke="#cdc5b2" strokeWidth="2.4" /></>],
  ["Sheet", <><path d="M2 3L24 1L30 5V31L4 29Z" fill="#f6fbf2" stroke="#4a8c2c" /><rect x="4" y="6" width="17" height="15" fill="#3c9a28" /><path d="M8 8L17 19M17 8L8 19" stroke="#fff" strokeWidth="3" /><path d="M7 25H13M16 25H21M24 25H28M24 11H28M24 17H28" stroke="#5fae3c" strokeWidth="4" /></>],
  ["Reader", <><rect x="2" y="1" width="28" height="30" rx="1" fill="#fafafa" stroke="#999" /><path d="M7 26Q16 16 14 6Q18 22 26 20Q14 19 7 26Z" fill="none" stroke="#d81818" strokeWidth="1.6" /></>],
  ["Disk tool", <><ellipse cx="18" cy="19" rx="13" ry="10.500" fill="#20807c" stroke="#1b3556" strokeWidth="2" /><ellipse cx="20" cy="18" rx="8.500" ry="6.500" fill="none" stroke="#b9cf40" strokeWidth="1.6" strokeDasharray="12 5" /><ellipse cx="19" cy="17" rx="5" ry="4" fill="#30c4bc" stroke="#125" /><circle cx="19" cy="16" r="1.600" fill="#e8e040" /><path d="M2 8L8 2L15 5L9 11Z" fill="#34c0b8" stroke="#125" /><path d="M5 15L11 12L9 24Z" fill="#555a7c" /></>],
  ["X server", <><path d="M2 3H9L29 30H22Z" fill="#7c108c" stroke="#222" /><path d="M30 2L3 30" stroke="#fff" strokeWidth="4" /><path d="M30 2L3 30" stroke="#222" strokeWidth="2" /></>],
];
const taskOrder = [0, 1, 2, 3, 4, 5, 6, 7, 8, 9, 8];

const bulb = "M6 12Q4 8 4 6.5Q5 3 8 3Q11 3 12 6.5Q12 8 10 12V14H6Z";

function DrillDialog() {
  return (
    <Dialog aria-label="Drill Tool Manager">
      <DialogTitle><XIcon /><span>Drill Tool Manager</span><Caption dark /></DialogTitle>
      <DialogBody>
        <Line>
          <Cell $w={167}><Push $w={161} $align="left">{"Layer          :"}</Push></Cell>
          <Cell $w={110} $tone="pale"><Field aria-label="Layer" defaultValue="drl" /></Cell>
          <Spacer $w={149} />
          <Cell $w={188} $tone="pale">
            <Spacer $w={8} /><span>Slots:</span><Spacer />
            <Pick label="Slots" value="Yes" w={114} align="center" />
          </Cell>
        </Line>
        <WideLine>
          <ThicknessCell $w={307} $tone="pale">
            <FieldLabel htmlFor="thick">Board Thickness :</FieldLabel>
            <Spacer $w={12} />
            <Field id="thick" $w={104} $h={24} defaultValue="1600" />
            <Spacer $w={3} /><span>my</span><Spacer />
          </ThicknessCell>
          <Cell $w={178}><Push $w={172} $h={25} $align="left">User Parameters :</Push></Cell>
          <Spacer $w={1} />
          <Cell $w={128} $tone="pale"><Field aria-label="User parameters" $h={26} defaultValue="hasl" /></Cell>
        </WideLine>
        <TableView>
          <ToolTable>
            <colgroup>{widths.map((w, i) => <col key={i} style={{ width: w }} />)}</colgroup>
            <thead>
              <tr>{columns.map((h, i) => <th key={i} scope="col">{h.split("\n").map((t) => <div key={t}>{t}</div>)}</th>)}</tr>
            </thead>
            <tbody>
              <GapRow><td colSpan={11} /></GapRow>
              <tr>
                <td><Expand aria-label="Expand T03"><svg width="18" height="18" fill="none" stroke="#000"><path d="M2 9.5H16M9.5 3V16M13.5 0V4.5H18" /></svg></Expand></td>
                <td><RowButton $tone="amber" $align="left">T03</RowButton></td>
                <CountCell>3</CountCell>
                <InputCell $tone="white"><Field $tone="white" aria-label="Slot length" /></InputCell>
                <InputCell $tone="cream"><Pick label="Type" value="NPlated" w={110} tone="cream" /></InputCell>
                <InputCell $tone="cream"><Field $tone="cream" aria-label="Finish size" defaultValue="3500" /></InputCell>
                <InputCell $tone="cream" $focus><Field $tone="cream" $caret={false} aria-label="Plus tolerance" defaultValue="100" /></InputCell>
                <InputCell $tone="cream"><Field $tone="cream" aria-label="Minus tolerance" defaultValue="100" /></InputCell>
                <InputCell $tone="white"><Field $tone="white" aria-label="Drill size" defaultValue="3500" /></InputCell>
                <InputCell $tone="white"><Field $tone="white" aria-label="Drill designation" /></InputCell>
                <td />
              </tr>
              <tr>
                <td />
                <td><RowButton $tone="teal" $align="left">Total</RowButton></td>
                <CountCell>3</CountCell>
                {columns.slice(3).map((_, i) => <td key={i} />)}
              </tr>
            </tbody>
          </ToolTable>
        </TableView>
        <Scroll>
          <svg width="14" height="11"><path d="M13 0V11L1 5.5Z" fill={c.teal} stroke={c.tealLight} /></svg>
          <Thumb />
          <svg width="14" height="11"><path d="M1 0V11L13 5.5Z" fill={c.teal} stroke={c.tealLight} /></svg>
        </Scroll>
        <Line>
          <ToolTag>T03</ToolTag>
          <NavCell $w={60}><Push $w={56}>First</Push></NavCell>
          <NavCell $w={35}><Push $w={33}>&lt;--</Push></NavCell>
          <NavCell $w={35}><Push $w={33}>--&gt;</Push></NavCell>
          <NavCell $w={50}><Push $w={47}>Last</Push></NavCell>
          <Cell $w={124} $gap={4} $pad={1}>
            <FieldLabel htmlFor="index">Index:</FieldLabel>
            <Field id="index" $tone="teal" $w={59} />
          </Cell>
          <NavCell $w={30}><Push $w={27} aria-label="Highlight"><svg width="16" height="17" fill="none" stroke="#000"><rect x=".5" y=".5" width="15" height="16" /><path d={bulb} /></svg></Push></NavCell>
          <NavCell $w={30}><Push $w={27} aria-label="Select drills"><svg width="16" height="17" fill="none" stroke="#000"><rect x=".5" y=".5" width="15" height="16" /><path d="M3 3H13L7 7L11 9L13 14M3 3L7 6M3 14L4 11L6 13L8 11L10 13" /></svg></Push></NavCell>
          <NavCell $w={30}><Push $w={27} aria-label="Clear highlight"><svg width="16" height="17" fill="none" stroke="#000"><rect x=".5" y=".5" width="15" height="16" /><path d={bulb} /><path d="M2 2L14 15M14 2L2 15" stroke="#e01010" strokeWidth="2" /></svg></Push></NavCell>
          <Cell />
          <NavCell $w={89} $tone="pale"><Pick label="Units" value="ml/my" w={80} /></NavCell>
          <NavCell $w={115} $tone="pale"><Pick label="Display" value="Regular" w={105} /></NavCell>
        </Line>
        <RowGap />
        <Line>
          <Cell />
          <NavCell $w={131}><Push $w={127}>Combine Tools</Push></NavCell>
          <Cell $w={362} $tone="pale">
            <Spacer $w={8} /><span>Merge Tools :</span><Spacer />
            <Pick label="Merge tools" value="Update Tools Numbers" w={213} />
          </Cell>
          <NavCell $w={56}><Push $w={54}>Merge</Push></NavCell>
        </Line>
        <Footer>
          {["Apply", "Calc Drills", "Update Table", "Close"].map((t) => <div key={t}><Push $h={25}>{t}</Push></div>)}
        </Footer>
      </DialogBody>
    </Dialog>
  );
}

export default function App() {
  return (
    <Screen>
      <Global />
      <TitleBar>
        <XIcon />
        <WinTitle>Graphic Editor 9.07b2 (00@HY-HYCAM-PC411 - Windows, pid:1576)</WinTitle>
        <Caption />
      </TitleBar>
      <MenuRow>
        <MenuBar>
          {menus.map(([a, u, b]) => <MenuItem key={a + u + b}>{a}{u && <u>{u}</u>}{b}</MenuItem>)}
        </MenuBar>
        <Brand>
          <svg width="162" height="52" viewBox="0 0 162 52" overflow="visible">
            <path fill="#f01818" d="M6 14L14 13.5V12.5L24 13V17L14 16V15ZM4 21L12 20V19L21 19.5V23.5L12 22.5V21.5ZM1 28L10 27V26L19 26.5V30.500L10 29.5V28.5ZM2 35L9 34V33L17 33.5V37.5L9 36.5V35.5Z" stroke="#f01818" strokeWidth=".6" />
            <g fill="#00007c" fontFamily="Liberation Sans" fontSize="32" fontWeight="bold" fontStyle="italic">
              <text x="21" y="37">Fr</text>
              <text x="73" y="37">ntline</text>
            </g>
            <circle cx="63" cy="29" r="9" fill="none" stroke="#00007c" strokeWidth="1.8" />
            <path d="M63 25L67 29L63 33L59 29Z" fill="#f01010" />
          </svg>
          <ProductBox>Genesis 2000<small>Graphic Editor</small></ProductBox>
          <DateBox>09 Sep 2021<br />07:39 PM</DateBox>
        </Brand>
      </MenuRow>
      <Main>
        <Side>
          <JobInfo><div>Job : 2s76200sa0</div><div>Step: set</div></JobInfo>
          <Framed><MatrixButton $h={20} $align="left">Job Matrix ...</MatrixButton></Framed>
          <LayerPane>
            <LayerList>
              {layers.map((g, i) => (
                <LayerGroup key={i}>
                  {g.map(([name, fill, swatch]) => (
                    <LayerRow key={name}>
                      <label>
                        <LayerCheck type="checkbox" $on={name === "drl"} />
                        <Swatch $fill={swatch ?? "#000"} />
                        <LayerName $fill={fill ?? c.pale}>
                          {name}
                          {name === "drl" && <svg width="5" height="5" fill="none" stroke="#000"><path d="M0 .5H5M0 2.500H5M0 4.500H5M.5 0V5M2.500 0V5M4.500 0V5" strokeWidth=".8" /></svg>}
                        </LayerName>
                      </label>
                    </LayerRow>
                  ))}
                </LayerGroup>
              ))}
            </LayerList>
          </LayerPane>
          <Selected>Selected : 0</Selected>
        </Side>
        <Canvas>
          <BoardArt />
          <DrillDialog />
          <Artwork viewBox="155 79 1601 895" aria-hidden="true">
            <path d="M773 351.5L466 211" stroke="#0f0" strokeWidth="4.5" strokeLinecap="round" />
            <path d="M445 201L471 205L465 218Z" fill="#0f0" stroke="#0f0" strokeWidth="2" strokeLinejoin="round" />
          </Artwork>
        </Canvas>
        <Tools>
          <ToolSet items={viewTools} />
          <ToolSet items={editTools} grey />
          <Overview>
            <OverviewFrame>
              <svg width="152" height="94" viewBox="0 0 152 94">
                <rect width="152" height="94" fill={R} />
                <rect x="24" y="11" width="112" height="78" fill="none" stroke="#7ac8c0" strokeWidth="2" />
                <path d="M22 16L29 23M29 16L22 23" stroke="#7ac8c0" />
              </svg>
            </OverviewFrame>
          </Overview>
          <Coordinates>{"X = 207.242802mm\nY = 0.330803mm"}</Coordinates>
        </Tools>
      </Main>
      <Prompt>
        <SmallTool aria-label="Snap diagonal"><svg width="20" height="20" fill="none" stroke="#000"><rect x=".5" y=".5" width="19" height="19" /><path d="M4 4L16 16M4 8V4H8M16 12V16H12" /></svg></SmallTool>
        <SmallTool aria-label="Snap angle"><svg width="20" height="20" fill="none" stroke="#000"><rect x=".5" y=".5" width="19" height="19" /><path d="M3 17L16 3M6 4V9M3 17H17M12 12V16M15 12V16M12 14H15" /></svg></SmallTool>
        <SmallTool $teal aria-label="Snap grid"><svg width="17" height="17" fill="none" stroke="#000"><rect x=".5" y=".5" width="16" height="16" /><path d="M3 14V5L6 3H14V14ZM3 9H14M9 3V14" /></svg></SmallTool>
        <PromptLabel>X Y :<Field $tone="cream" $w={169} $h={29} /></PromptLabel>
        <SmallTool $teal aria-label="Alert"><svg width="17" height="17" fill="none" stroke="#000"><rect x=".5" y=".5" width="16" height="16" /><path d="M8.5 3V11M8.5 12.5V14.5" strokeWidth="2" /></svg></SmallTool>
        <Message>&lt;M1&gt; – Select first corner</Message>
        <UnitBox><Pick label="Unit" value="MM" w={72} tone="teal" /></UnitBox>
      </Prompt>
      <StatusBar><div /></StatusBar>
      <Taskbar>
        <Start aria-label="Start">
          <svg width="38" height="38" viewBox="0 0 38 38">
            <circle cx="19" cy="19" r="17" fill="#1d5c94" stroke="#173a5c" />
            <ellipse cx="19" cy="12" rx="14" ry="9" fill="#7fb8dc" opacity=".7" />
            <path d="M10 12Q14 9 18 12L17 18Q13 16 9 18Z" fill="#f0582c" />
            <path d="M19 12Q24 15 29 12L27 19Q22 21 18 18Z" fill="#8cc63c" />
            <path d="M9 20Q13 17 17 20L15 27Q12 24 8 26Z" fill="#38a0e8" />
            <path d="M18 20Q22 23 27 21L25 28Q20 30 16 27Z" fill="#fcc828" />
          </svg>
        </Start>
        {taskOrder.map((n, i) => (
          <TaskButton key={i} $active={n === 9} aria-label={taskIcons[n][0]}>
            <svg width="32" height="32" viewBox="0 0 32 32" fill="none">{taskIcons[n][1]}</svg>
          </TaskButton>
        ))}
        <Tray>
          <svg width="16" height="14" fill="none" stroke="#ddd"><path d="M2 5Q5 1 9 3T14 1" /><rect x="1" y="6" width="14" height="7" /><path d="M3 8.5H13M3 10.5H13" strokeDasharray="1 1" /></svg>
          <svg width="16" height="16"><circle cx="8" cy="8" r="7" fill="#0c28a8" stroke="#dde" /><text x="5" y="12" fontSize="11" fontWeight="bold" fill="#fff" fontFamily="Liberation Sans">?</text></svg>
          <svg width="10" height="20" fill="none" stroke="#fff"><rect x="3.5" y="2.5" width="5" height="3" /><rect x="1.5" y="4.5" width="5" height="3" fill="#8b8371" /><path d="M2 15H8L5 18Z" fill="#fff" stroke="none" /></svg>
          <svg width="10" height="8"><path d="M1 7L5 2L9 7Z" fill="#fff" /></svg>
          <svg width="18" height="16"><path d="M1 13L12 1L9 13Z" fill="#e01818" /><path d="M10 5L17 14L10 10Z" fill="#20d840" /></svg>
          <svg width="17" height="16" fill="none" stroke="#fff"><path d="M1 6V10H4L8 14V2L4 6Z" fill="#fff" /><path d="M10 5Q12 8 10 11M12 3Q16 8 12 13" /></svg>
          <svg width="17" height="17"><path d="M2 1V16" stroke="#fff" strokeWidth="2" /><path d="M3 2Q7 0 9 3Q12 4 14 2V9H3Z" fill="#eee" /><circle cx="11" cy="11" r="5" fill="#d82020" /><path d="M9 9L13 13M13 9L9 13" stroke="#fff" strokeWidth="1.5" /></svg>
          <svg width="17" height="16" fill="none" stroke="#fff"><rect x="5" y="4" width="11" height="8" strokeWidth="1.5" /><path d="M7 14.5H14M3 1V5M1 1V4H5V1M3 5V13H6" /></svg>
          <Clock>19:40<br />2021/9/9</Clock>
          <ShowDesktop aria-label="Show desktop" />
        </Tray>
      </Taskbar>
    </Screen>
  );
}
